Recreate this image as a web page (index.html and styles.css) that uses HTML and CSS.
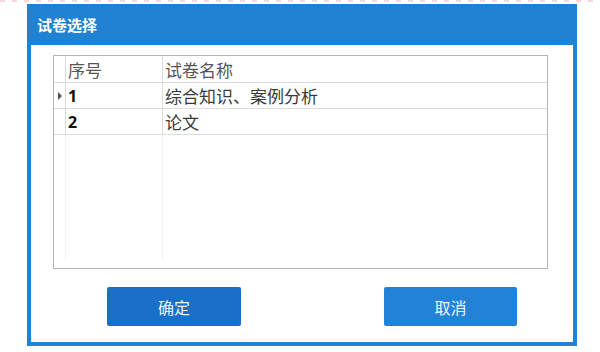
FILE: index.html
```html
<!DOCTYPE html>
<html lang="zh-CN">
<head>
    <meta charset="UTF-8">
    <title>试卷选择</title>
    <link rel="stylesheet" href="styles.css">
</head>
<body>

    <!-- leftover line from the cropped page above -->
    <div class="cut-line"></div>

    <!-- Dialog -->
    <div class="dialog">
        <div class="title-bar">试卷选择</div>

        <div class="dialog-body">
            <div class="grid">
                <div class="row head">
                    <div class="cell marker"></div>
                    <div class="cell">序号</div>
                    <div class="cell">试卷名称</div>
                </div>
                <div class="row">
                    <div class="cell marker"><span class="arrow"></span></div>
                    <div class="cell num">1</div>
                    <div class="cell">综合知识、案例分析</div>
                </div>
                <div class="row">
                    <div class="cell marker"></div>
                    <div class="cell num">2</div>
                    <div class="cell">论文</div>
                </div>
                <div class="row filler">
                    <div class="cell marker"></div>
                    <div class="cell"></div>
                    <div class="cell"></div>
                </div>
            </div>

            <div class="buttons">
                <button class="btn btn-ok">确定</button>
                <button class="btn btn-cancel">取消</button>
            </div>
        </div>
    </div>

</body>
</html>
```

FILE: styles.css
```css
body {
    margin: 0;
    padding: 0;
    background-color: #fff;
    font-family: "Noto Sans CJK SC", sans-serif;
}

.cut-line {
    height: 2px;
    margin-bottom: 2px;
    background: repeating-linear-gradient(90deg, #fbd6dd 0 5px, #fff 5px 12px);
}

/* Dialog frame */
.dialog {
    width: 550px;
    height: 342px;
    margin-left: 27px;
    display: flex;
    flex-direction: column;
    box-sizing: border-box;
}

.title-bar {
    height: 41px;
    background-color: #1f82d2;
    color: #fff;
    font-size: 15px;
    font-weight: 700;
    padding-left: 10px;
    display: flex;
    align-items: center;
}

.dialog-body {
    flex: 1;
    border: 4px solid #1f82d2;
    border-top: none;
    background-color: #fff;
    padding: 10px 25px 0 22px;
}

/* Data grid */
.grid {
    height: 214px;
    border: 1px solid #b4b4b4;
    box-sizing: border-box;
    display: flex;
    flex-direction: column;
    color: #3a3a3a;
    font-size: 17px;
}

.row {
    display: grid;
    grid-template-columns: 12px 97px 1fr;
    height: 25px;
    border-bottom: 1px solid #dcdcdc;
}

.row.head {
    height: 26px;
    color: #555;
}

.cell {
    border-right: 1px solid #dcdcdc;
    display: flex;
    align-items: center;
    padding-left: 2px;
    white-space: nowrap;
}

.cell:last-child {
    border-right: none;
}

.cell.marker {
    padding-left: 0;
    justify-content: center;
}

.cell.num {
    font-family: "Open Sans", "Noto Sans", sans-serif;
    font-weight: bold;
    color: #111;
    font-size: 16px;
}

.arrow {
    width: 0;
    height: 0;
    border-top: 4px solid transparent;
    border-bottom: 4px solid transparent;
    border-left: 4px solid #555;
}

.row.filler {
    flex: 1;
    border-bottom: none;
}

.row.filler .cell {
    border-right-color: #f2f2f2;
    margin-bottom: 8px;
}

/* Buttons */
.buttons {
    display: flex;
    gap: 143px;
    padding: 18px 0 0 54px;
}

.btn {
    height: 39px;
    width: 134px;
    border: none;
    border-radius: 2px;
    color: #eef4fb;
    font-family: "Noto Sans CJK SC", sans-serif;
    font-size: 16px;
    cursor: pointer;
}

.btn-ok {
    background-color: #1a6fc8;
}

.btn-cancel {
    width: 133px;
    background-color: #2283d6;
}
```
